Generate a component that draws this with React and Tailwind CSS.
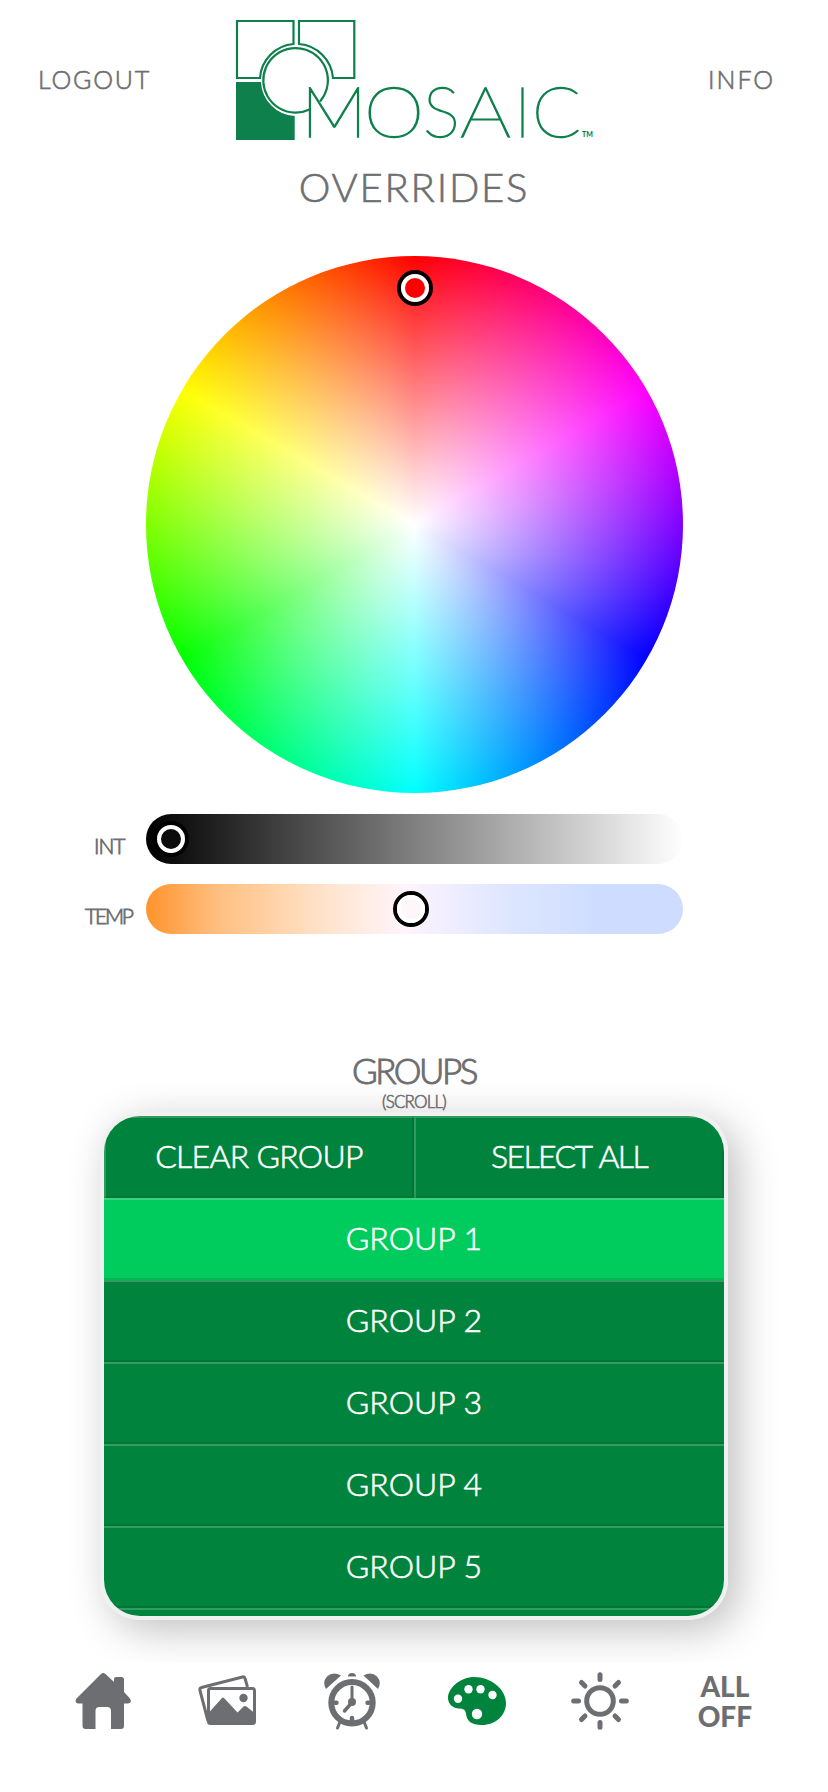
const WHEEL =
  "radial-gradient(circle closest-side, #fff, transparent), conic-gradient(red, magenta, blue, cyan, lime, yellow, red)";

function Handle({ className, fill }) {
  return (
    <svg className={"absolute size-9 " + className} viewBox="0 0 36 36">
      <circle cx="18" cy="18" r="16" fill={fill} stroke="#000" strokeWidth="4" />
      <circle cx="18" cy="18" r="12" fill="none" stroke="#fff" strokeWidth="4" />
    </svg>
  );
}

function Logo() {
  return (
    <svg className="h-[130px] w-[370px] overflow-visible" viewBox="230 14 370 130" fill="none" stroke="#0d804b" strokeWidth="2.200">
      <path d="M237 21H293.500V44A36.500 36.500 0 0 0 260 78H237Z" />
      <path d="M299 21H354.300V78H333A37 37 0 0 0 299 44Z" />
      <path d="M236 82H261A35.500 35.500 0 0 0 294.700 116V140H236Z" fill="#0d804b" stroke="none" />
      <path d="M309.500 109.500A32.300 32.300 0 1 1 320 101.500" />
      <g fill="#0d804b" strokeWidth="1.400" fontFamily="Lato" fontWeight="100" fontSize="69.500">
        <text x="301" y="136.700" textLength="66" lengthAdjust="spacingAndGlyphs">M</text>
        <text x="364" y="136.700" textLength="60" lengthAdjust="spacingAndGlyphs">O</text>
        <text x="423" y="136.700">S</text>
        <text x="460" y="136.700" textLength="51" lengthAdjust="spacingAndGlyphs">A</text>
        <text x="514" y="136.700">I</text>
        <text x="532" y="136.700" textLength="49" lengthAdjust="spacingAndGlyphs">C</text>
        <text x="582" y="137" fontSize="7" fontWeight="900" stroke="none">TM</text>
      </g>
    </svg>
  );
}

function HomeIcon() {
  return (
    <svg className="h-14 w-14" viewBox="75 1673 56 56" fill="#6d6e71">
      <path d="M101 1674Q103.300 1672 105.500 1674L114 1682V1679Q114 1677 116 1677H121.500Q124 1677 124 1679.500V1692L130 1698.500Q132.500 1703 128 1703.500H124V1726Q124 1729 121 1729H111V1711Q111 1707 107 1707H99.500Q95.500 1707 95.500 1711V1729H85.500Q82.500 1729 82.500 1726V1703.500H78Q74 1702.500 76.500 1698.500Z" />
    </svg>
  );
}

function PhotosIcon() {
  return (
    <svg className="h-14 w-[60px]" viewBox="197 1673 60 56" fill="none" stroke="#6d6e71" strokeWidth="3" strokeLinejoin="round">
      <path d="M247.500 1687L245 1678.500Q244.500 1676.500 242.500 1677L201.500 1687.500Q199.300 1688 200 1690.500L208 1721" />
      <rect x="208.500" y="1688.500" width="46" height="35" rx="2" />
      <path d="M209 1712.500L222 1698Q223.200 1697 224.500 1698.500L237.500 1712.500L243.500 1706.500Q245 1705.500 246.500 1706.500L254.500 1713V1723.500H209Z" fill="#6d6e71" stroke="none" />
      <circle cx="243.500" cy="1698" r="4.200" fill="#6d6e71" stroke="none" />
    </svg>
  );
}

function AlarmIcon() {
  return (
    <svg className="h-[58px] w-14" viewBox="323 1672 56 58" fill="none" stroke="#6d6e71" strokeLinecap="round">
      <circle cx="351" cy="1702.700" r="20.700" strokeWidth="6" />
      <path d="M325 1689Q321 1682 326 1676.500Q332 1671 340 1675.500ZM377 1689Q381 1682 376 1676.500Q370 1671 362.500 1675.500ZM347 1676.500Q347 1673 351 1673Q355 1673 355 1676.500Z" fill="#6d6e71" stroke="none" />
      <path d="M338.500 1723L336.500 1728M363.500 1723L365.500 1728" strokeWidth="3" />
      <path d="M334 1702.700H335.500M366.500 1702.700H368M351 1718V1720" strokeWidth="4.500" />
      <path d="M351 1687V1702" strokeWidth="3" />
      <path d="M350.500 1703L343.500 1711" strokeWidth="3.500" />
      <circle cx="351" cy="1702" r="4" fill="#6d6e71" stroke="none" />
    </svg>
  );
}

function PaletteIcon() {
  return (
    <svg className="ml-px h-[50px] w-[58px]" viewBox="448 1676 58 50">
      <path d="M448 1699C447 1689 460 1677 474 1677C492 1677 506 1690 506 1703C506 1716 495 1725 482 1725C471 1725 467 1721 466 1714C465.500 1709 463 1709 459 1708.500C453 1708 449 1705 448 1699Z" fill="#00843d" />
      <g fill="#fff">
        <circle cx="458" cy="1698.800" r="4.200" />
        <circle cx="468.500" cy="1689.300" r="4.200" />
        <circle cx="480.500" cy="1689.300" r="4.200" />
        <circle cx="492.500" cy="1695" r="4.200" />
        <circle cx="477" cy="1714" r="5.200" />
      </g>
    </svg>
  );
}

function SunIcon() {
  return (
    <svg className="h-[58px] w-[58px]" viewBox="572 1672 58 58" fill="none" stroke="#6d6e71" strokeWidth="5" strokeLinecap="round">
      <circle cx="601" cy="1701" r="13.300" />
      <path d="M601 1674.700V1679.500M601 1722.500V1727.300M574.700 1701H579.500M622.500 1701H627.300M582.500 1682.500L586 1686M616 1716L619.500 1719.500M582.500 1719.500L586 1716M616 1686L619.500 1682.500" />
    </svg>
  );
}

const rowEdge = "shadow-[inset_0_2px_rgba(255,255,255,0.2),inset_0_-2px_rgba(0,0,0,0.1)]";
const cellEdge = "shadow-[inset_2px_2px_rgba(255,255,255,0.18),inset_-2px_-2px_rgba(0,0,0,0.1)]";

export default function App() {
  return (
    <div className="flex h-[1792px] w-[828px] flex-col overflow-hidden bg-white font-['Lato',sans-serif] font-light text-[#6d6e71] [-webkit-text-stroke:0.6px]">
      <header className="flex h-[144px] shrink-0 items-start pt-[14px]">
        <button className="ml-[38px] mt-[49px] w-[192px] text-left text-[25px] leading-8 tracking-[1.800px]">LOGOUT</button>
        <Logo />
        <button className="ml-[108px] mt-[49px] text-[25px] leading-8 tracking-[2px]">INFO</button>
      </header>
      <h1 className="h-[112px] shrink-0 pt-[19px] text-center text-[40px] leading-[48px] tracking-[1.800px]">OVERRIDES</h1>

      <div className="relative ml-[146px] size-[537px] shrink-0 overflow-hidden rounded-full" style={{ background: WHEEL }}>
        <Handle className="left-[251px] top-[14px]" fill="#f00" />
      </div>

      <div className="mt-[21px] flex h-[50px] shrink-0">
        <span className="w-[146px] pl-[94px] pt-[20px] text-[21px] leading-6 tracking-[-1px] [-webkit-text-stroke:0.8px]">INT</span>
        <div className="relative h-[50px] w-[537px] rounded-full bg-[linear-gradient(to_right,#000,#fff)]">
          <Handle className="left-[7px] top-[7px]" fill="#0c0c0c" />
        </div>
      </div>
      <div className="mt-5 flex h-[50px] shrink-0">
        <span className="w-[146px] pl-[85px] pt-[20px] text-[21px] leading-6 tracking-[-2.200px] [-webkit-text-stroke:0.8px]">TEMP</span>
        <div className="relative h-[50px] w-[537px] rounded-full bg-[linear-gradient(to_right,#ff932c_0%,#ffbe7e_13%,#ffd5ad_25%,#ffe7d5_36%,#fff4fb_48%,#f0eeff_56%,#dde6ff_68%,#cddcff_85%,#cddcff_100%)]">
          <Handle className="left-[247px] top-[7px]" fill="#fff6fc" />
        </div>
      </div>

      <section className="flex h-[728px] shrink-0 flex-col overflow-hidden pt-[115px]">
        <h2 className="relative z-10 h-[43px] text-center text-[35px] leading-[42px] tracking-[-2.500px] [-webkit-text-stroke:1px]">GROUPS</h2>
        <p className="relative z-10 h-[20px] text-center text-[17px] leading-5 tracking-[-0.800px]">(SCROLL)</p>
        <div className="ml-[100px] h-[508px] w-[628px] shrink-0 rounded-[40px] border-4 border-[#f0f0f0] shadow-[10px_10px_40px_rgba(0,0,0,0.25)]">
          <div className="h-full overflow-hidden rounded-[36px] bg-[#00843d] text-[32px] text-white">
            <div className="grid h-[82px] grid-cols-2">
              <button className={"pb-0.5 tracking-[-0.700px] " + cellEdge}>CLEAR GROUP</button>
              <button className={"pb-0.5 tracking-[-1.600px] [word-spacing:2px] " + cellEdge}>SELECT ALL</button>
            </div>
            {[1, 2, 3, 4, 5, 6].map((n) => (
              <button key={n} className={"block h-[82px] w-full pb-0.5 " + rowEdge + (n === 1 ? " bg-[#00cc5e]" : "")}>GROUP {n}</button>
            ))}
          </div>
        </div>
      </section>

      <nav className="grid h-[130px] shrink-0 grid-cols-6 items-start px-[41px] pt-[10px]">
        <div className="flex h-[58px] items-center justify-center"><HomeIcon /></div>
        <div className="flex h-[58px] items-center justify-center"><PhotosIcon /></div>
        <div className="flex h-[58px] items-center justify-center"><AlarmIcon /></div>
        <div className="flex h-[58px] items-center justify-center"><PaletteIcon /></div>
        <div className="flex h-[58px] items-center justify-center"><SunIcon /></div>
        <div className="flex h-[58px] flex-col items-center justify-center text-[28px] font-black leading-[30px] [-webkit-text-stroke:0px]"><span>ALL</span><span>OFF</span></div>
      </nav>
    </div>
  );
}
